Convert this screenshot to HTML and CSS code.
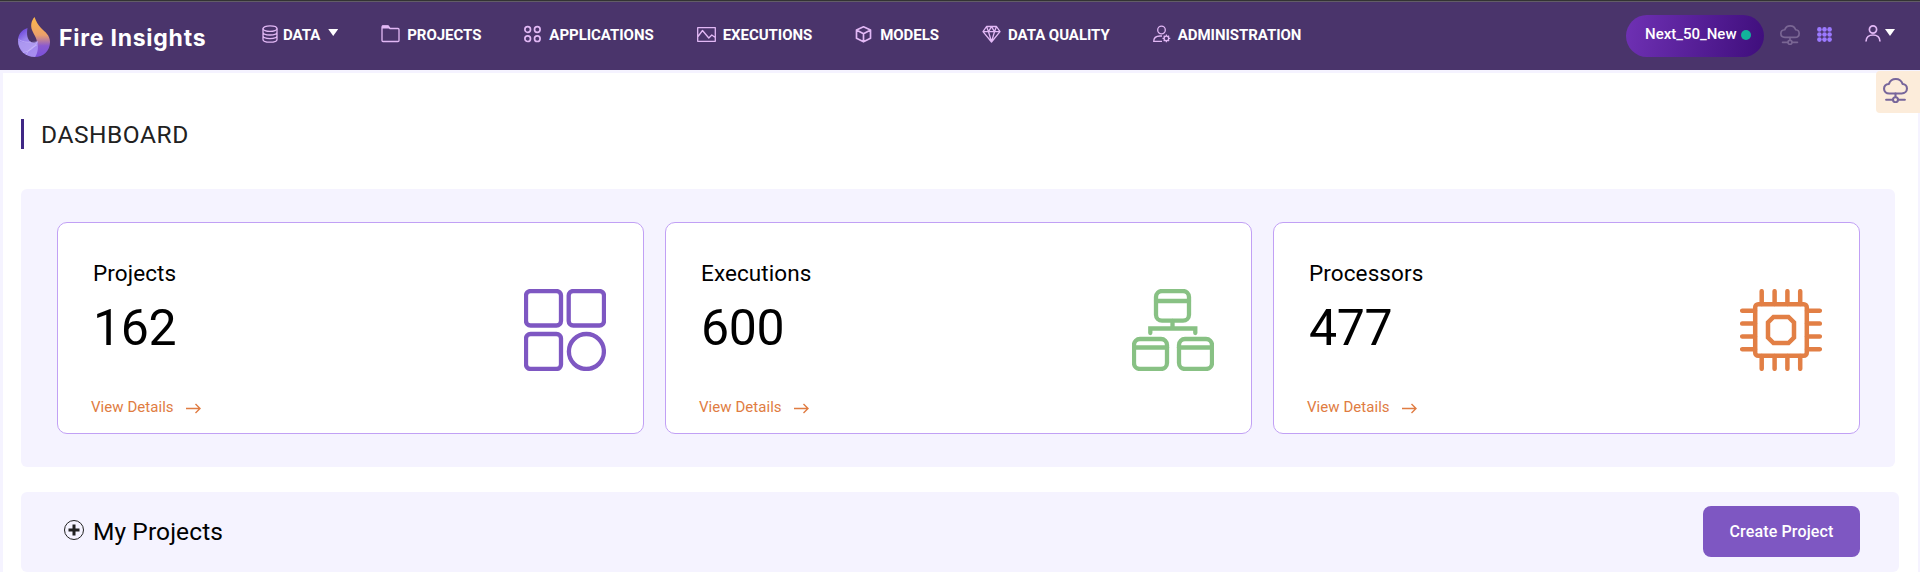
FILE: index.html
```html
<!DOCTYPE html>
<html lang="en">
<head>
<meta charset="utf-8">
<title>Fire Insights</title>
<link rel="stylesheet" href="styles.css">
</head>
<body>
<header class="topbar">
  <a class="brand">
    <svg class="brand-logo" width="34" height="42" viewBox="0 0 34 42">
      <defs>
        <linearGradient id="flame" x1="0" y1="0" x2="0" y2="1"><stop offset="0" stop-color="#ffb84a"/><stop offset=".45" stop-color="#eba06a"/><stop offset=".72" stop-color="#8a5ad0"/><stop offset="1" stop-color="#7a50dc"/></linearGradient>
        <linearGradient id="orb" x1="0" y1="0" x2=".5" y2="1"><stop offset="0" stop-color="#5b2fd6"/><stop offset=".45" stop-color="#9b83ec"/><stop offset="1" stop-color="#a78df0"/></linearGradient>
      </defs>
      <path d="M17.500 1C14 5 13.500 10 15 14c2 5 5 8 5 13 0 6-3 10-2 14 8 0 15-6 15-15 0-7-5-10-9-14-3-3-5-7-6.500-11z" fill="url(#flame)"/>
      <path d="M10.500 12C4 14 1 19 1 25c0 9 7 16 17 16 3-4 3.500-10 2.500-16-2 2-4.500 2.200-6.500 1-4-2.500-4.500-8-3.500-14z" fill="url(#orb)"/>
      <path d="M1 24c4 3 9 3 13 2 3 0 5-1 6.500-1-2 6-7 9-14 11C3 33 1 29 1 24z" fill="#c3b4f5" opacity=".4"/>
      <path d="M1.200 23c4 3 8 3.500 12.800 3M6 36.500c7-1.500 12-5 14.500-11M9 39c2-5 6-8 11-10" fill="none" stroke="#d6caff" stroke-width=".7" opacity=".7"/>
    </svg>
    <span class="brand-name">Fire Insights</span>
  </a>
  <nav class="nav">
    <a class="nav-item nav-data">
      <svg width="16" height="18" viewBox="0 0 16 18"><g class="line"><ellipse cx="8" cy="3.600" rx="7" ry="2.800"/><path d="M1 3.600v10.800c0 1.600 3.100 2.800 7 2.800s7-1.200 7-2.800V3.600M1 7.200C1 8.800 4.100 10 8 10s7-1.200 7-2.800M1 10.800c0 1.600 3.100 2.800 7 2.800s7-1.200 7-2.800"/></g></svg>
      <span>DATA</span><i class="caret"></i>
    </a>
    <a class="nav-item nav-projects">
      <svg width="19" height="18" viewBox="0 0 19 18"><path class="line" d="M1 15.500V2q0-1 1-1h5l2 2.500h8q1 0 1 1v11q0 1-1 1H2q-1 0-1-1z"/><path d="M1 .500h6.500l2 3H1z" fill="#e2b8f5"/></svg>
      <span>PROJECTS</span>
    </a>
    <a class="nav-item nav-apps">
      <svg width="17" height="18" viewBox="0 0 17 18"><g class="line thick"><circle cx="3.700" cy="4.500" r="2.800"/><circle cx="13.300" cy="4.500" r="2.800"/><circle cx="3.700" cy="13.700" r="2.800"/><circle cx="13.300" cy="13.700" r="2.800"/></g></svg>
      <span>APPLICATIONS</span>
    </a>
    <a class="nav-item nav-exec">
      <svg width="19" height="18" viewBox="0 0 19 18"><path class="line" d="M.700 2.700h17.600v13.600H.700zM1 11.500l4.500-6 6.300 7.500 3-3 3.500 2.500"/></svg>
      <span>EXECUTIONS</span>
    </a>
    <a class="nav-item nav-models">
      <svg width="17" height="18" viewBox="0 0 17 18"><path class="line thick" d="M8.500 1.800l7 3.200v8.300l-7 3.500-7-3.500V5zM1.500 5l7 3.800 7-3.800M8.500 8.800v8"/></svg>
      <span>MODELS</span>
    </a>
    <a class="nav-item nav-quality">
      <svg width="19" height="18" viewBox="0 0 19 18"><path class="line" d="M4.500 1.500h10L18 6.700 9.500 17 1 6.700zM1 6.700h17M4.500 1.500l2 5.200 3 10 3-10 2-5.200M6.500 6.700l3-5 3 5"/></svg>
      <span>DATA QUALITY</span>
    </a>
    <a class="nav-item nav-admin">
      <svg width="18" height="18" viewBox="0 0 18 18"><g class="line"><circle cx="8.500" cy="5" r="3.800"/><path d="M9 16.400H.700c0-3.400 2.400-5.400 6.300-5.400h2"/><circle cx="13.400" cy="13.400" r="2.300"/><path d="M13.400 9.500v1.600M13.400 15.700v1.600M9.500 13.400h1.600M15.700 13.400h1.600M10.700 10.700l1.100 1.100M15 15l1.100 1.100M10.700 16.100l1.100-1.100M15 11.800l1.100-1.100"/></g></svg>
      <span>ADMINISTRATION</span>
    </a>
  </nav>
  <div class="tools">
    <div class="workspace"><span>Next_50_New</span><i class="status"></i></div>
    <svg class="tool-cloud" width="20" height="20" viewBox="0 0 24 24"><use href="#cloud"/></svg>
    <svg class="tool-grid" width="15" height="15" viewBox="0 0 15 15" fill="#9b79ff"><circle cx="2.400" cy="2.400" r="2.300"/><circle cx="7.500" cy="2.400" r="2.300"/><circle cx="12.600" cy="2.400" r="2.300"/><circle cx="2.400" cy="7.500" r="2.300"/><circle cx="7.500" cy="7.500" r="2.300"/><circle cx="12.600" cy="7.500" r="2.300"/><circle cx="2.400" cy="12.600" r="2.300"/><circle cx="7.500" cy="12.600" r="2.300"/><circle cx="12.600" cy="12.600" r="2.300"/></svg>
    <svg class="tool-user" width="16" height="17" viewBox="0 0 16 17"><g class="line thick"><circle cx="8" cy="4.500" r="3.600"/><path d="M1 16.500c0-4 3-6.500 7-6.500s7 2.500 7 6.500"/></g></svg>
    <i class="caret"></i>
  </div>
</header>

<aside class="cloud-tab">
  <svg width="25" height="25" viewBox="0 0 24 24">
    <g id="cloud" fill="none" stroke="currentColor" stroke-width="2" stroke-linecap="round" stroke-linejoin="round"><path d="M6 14.800h12c2.800 0 5-1.900 5-4.700 0-2.500-2-4.200-4.200-4.400C17.800 2.900 15.300 1 12.300 1 9.200 1 6.600 2.900 5.700 5.700 3 5.900 1 7.700 1 10.300c0 2.700 2.200 4.500 5 4.500z"/><path d="M12 15v3M3 20.800h6.500M14.500 20.800H21"/><circle cx="12" cy="20.800" r="2.400"/></g>
  </svg>
</aside>

<main class="page">
  <h1 class="page-title">DASHBOARD</h1>

  <section class="stats">
    <article class="card">
      <div class="card-text">
        <h2>Projects</h2>
        <p class="count">162</p>
        <a class="details">View Details <svg width="15" height="11" viewBox="0 0 15 11"><path d="M0 5.500h13.500M9.500 1l4.500 4.500L9.500 10"/></svg></a>
      </div>
      <svg class="card-icon purple" width="82" height="82" viewBox="0 0 82 82"><rect x="2" y="2" width="35" height="34.500" rx="4.500"/><rect x="44.700" y="2" width="35.300" height="34.500" rx="4.500"/><rect x="2" y="45" width="35" height="35" rx="4.500"/><circle cx="62.400" cy="62.500" r="17.500"/></svg>
    </article>
    <article class="card">
      <div class="card-text">
        <h2>Executions</h2>
        <p class="count">600</p>
        <a class="details">View Details <svg width="15" height="11" viewBox="0 0 15 11"><path d="M0 5.500h13.500M9.500 1l4.500 4.500L9.500 10"/></svg></a>
      </div>
      <svg class="card-icon green" width="82" height="82" viewBox="0 0 82 82"><rect x="24" y="2" width="33" height="29.700" rx="6"/><path d="M24 12h33M40.500 32v7.500M18.300 44v-4.500h45V44"/><rect x="2" y="50" width="33" height="30" rx="6"/><path d="M2 58.500h33"/><rect x="47" y="50" width="33" height="30" rx="6"/><path d="M47 58.500h33"/></svg>
    </article>
    <article class="card">
      <div class="card-text">
        <h2>Processors</h2>
        <p class="count">477</p>
        <a class="details">View Details <svg width="15" height="11" viewBox="0 0 15 11"><path d="M0 5.500h13.500M9.500 1l4.500 4.500L9.500 10"/></svg></a>
      </div>
      <svg class="card-icon orange" width="82" height="82" viewBox="0 0 82 82"><rect x="15.200" y="15.200" width="51.600" height="51.600" rx="3"/><path d="M33.500 28h15l5.500 5.500v15L48.500 54h-15L28 48.500v-15z"/><path d="M21.700 2.200V15M34.600 2.200V15M47.400 2.200V15M60.200 2.200V15M21.700 67v12.800M34.600 67v12.800M47.400 67v12.800M60.200 67v12.800M2.200 21.700H15M2.200 34.600H15M2.200 47.400H15M2.200 60.200H15M67 21.700h12.800M67 34.600h12.800M67 47.400h12.800M67 60.200h12.800"/></svg>
    </article>
  </section>

  <section class="my-projects">
    <svg width="20" height="20" viewBox="0 0 20 20"><circle cx="10" cy="10" r="9.500" fill="none" stroke="#212121"/><path d="M10 4.500v11M4.500 10h11" stroke="#212121" stroke-width="3"/></svg>
    <h2>My Projects</h2>
    <button class="create">Create Project</button>
  </section>
</main>
</body>
</html>
```
FILE: styles.css
```css
* { box-sizing: border-box; }
body {
  margin: 0;
  height: 572px;
  overflow: hidden;
  background: #f5f3ff;
  font-family: Roboto, "Liberation Sans", sans-serif;
  color: #000;
}
h1, h2, p { margin: 0; font-weight: 400; }
svg { display: block; flex: none; }

.topbar {
  display: flex;
  align-items: flex-start;
  height: 70px;
  border-top: 1px solid #333;
  box-shadow: inset 0 1px #625d66;
  background: #4a346b;
  color: #fff;
}
.brand { display: flex; padding: 15px 0 0 17px; width: 262px; }
.brand-name {
  margin: 8px 0 0 8px;
  font: 700 23px/28px Inter, sans-serif;
  letter-spacing: .75px;
  white-space: nowrap;
}
.nav { display: flex; gap: 43px; padding-top: 24px; }
.nav-item {
  display: flex;
  height: 20px;
  font-size: 15px;
  font-weight: 700;
  letter-spacing: -.04px;
  line-height: 20px;
  white-space: nowrap;
}
.nav-item span { margin-left: 5px; }
.nav-exec span { margin-left: 7px; }
.nav-projects span { margin-left: 7px; }
.nav-apps span { margin-left: 8px; }
.nav-models span { margin-left: 8px; }
.nav-quality span { margin-left: 7px; }
.nav-admin span { margin-left: 7px; }
.line { fill: none; stroke: #e2b8f5; stroke-width: 1.3; stroke-linejoin: round; }
.thick { stroke-width: 1.7; }
.caret {
  width: 10px;
  height: 7px;
  background: #fff;
  clip-path: polygon(0 0, 100% 0, 50% 100%);
}
.nav .caret { margin: 4px 0 0 8px; }

.tools { display: flex; margin-left: auto; padding: 14px 25px 0 0; }
.workspace {
  display: flex;
  width: 138px;
  height: 42px;
  padding-left: 19px;
  border-radius: 21px;
  background: linear-gradient(100deg, #6f31b4, #3f0e7c);
  font-size: 15px;
  font-weight: 500;
  line-height: 38px;
}
.workspace span { width: 96px; }
.status { width: 10px; height: 10px; margin-top: 15px; border-radius: 50%; background: #12b39b; }
.tool-cloud { margin: 10px 0 0 16px; color: #7a6694; }
.tool-grid { margin: 12px 0 0 17px; }
.tool-user { margin: 10px 0 0 33px; }
.tools .caret { margin: 14px 0 0 4px; }

.cloud-tab {
  position: absolute;
  top: 71px;
  right: 0;
  width: 44px;
  height: 42px;
  padding: 7px 0 0 7px;
  border-radius: 4px 0 0 4px;
  background: #fcecda;
  color: #77669b;
}

.page { margin: 3px 2px 0 3px; height: 499px; padding: 46px 0 0 18px; background: #fff; }
.page-title {
  height: 30px;
  padding-left: 17px;
  border-left: 3px solid #3f2885;
  color: #212121;
  font-size: 24.500px;
  letter-spacing: .55px;
  line-height: 31px;
}
.stats {
  display: grid;
  grid-template-columns: repeat(3, 587px);
  gap: 21px;
  width: 1874px;
  height: 278px;
  margin-top: 40px;
  padding: 33px 35px 33px 36px;
  border-radius: 6px;
  background: #f5f3ff;
}
.card {
  display: flex;
  justify-content: space-between;
  padding: 0 37px 0 33px;
  border: 1px solid #c1a0f5;
  border-radius: 10px;
  background: #fff;
}
.card-text { padding-top: 36px; }
.card h2 { padding-left: 2px; font-size: 22.500px; letter-spacing: .1px; line-height: 28px; }
.count { padding-left: 2px; font-size: 50px; letter-spacing: -.3px; line-height: 60px; margin-top: 11px; }
.details {
  display: flex;
  gap: 12px;
  margin-top: 39px;
  color: #e07c42;
  font-size: 15px;
  letter-spacing: .05px;
  line-height: 20px;
}
.details svg { margin-top: 6px; fill: none; stroke: #e07c42; stroke-width: 1.4; }
.card-icon { margin-top: 66px; fill: none; stroke-width: 4.300; stroke-linecap: round; }
.purple { stroke: #7e57c2; }
.green { stroke: #88c184; }
.orange { stroke: #e27f45; stroke-width: 4.500; }

.my-projects {
  display: flex;
  align-items: center;
  width: 1878px;
  height: 80px;
  margin-top: 25px;
  padding: 0 39px 2px 43px;
  border-radius: 6px;
  background: #f5f3ff;
}
.my-projects svg { margin-bottom: 2px; }
.my-projects h2 { margin-left: 9px; font-size: 24.500px; letter-spacing: .1px; }
.create {
  width: 157px;
  height: 51px;
  margin-left: auto;
  border: 0;
  border-radius: 8px;
  background: #7e57c2;
  color: #fff;
  font: 500 16px Roboto, sans-serif;
  letter-spacing: .15px;
}
```
